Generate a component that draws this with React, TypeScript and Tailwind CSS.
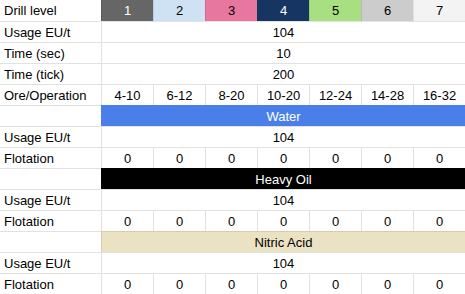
import React from "react";

const levels = [
  { n: "1", bg: "bg-[#666666]", bd: "border-[#5a5a5a]", tx: "text-white" },
  { n: "2", bg: "bg-[#cfe2f3]", bd: "border-[#b8cde2]", tx: "text-black" },
  { n: "3", bg: "bg-[#e8779f]", bd: "border-[#d6688f]", tx: "text-black" },
  { n: "4", bg: "bg-[#163562]", bd: "border-[#163562]", tx: "text-white" },
  { n: "5", bg: "bg-[#a8df80]", bd: "border-[#96cf6e]", tx: "text-black" },
  { n: "6", bg: "bg-[#cccccc]", bd: "border-[#b8b8b8]", tx: "text-black" },
  { n: "7", bg: "bg-[#f3f3f3]", bd: "border-[#e0e0e0]", tx: "text-black" },
];

const ores = ["4-10", "6-12", "8-20", "10-20", "12-24", "14-28", "16-32"];

function Label({ text, first }: { text: string; first?: boolean }) {
  return (
    <div
      className={`h-[21px] pl-[4px] flex items-center whitespace-nowrap border-[#e2e2e2] ${first ? "" : "border-t"}`}
    >
      {text}
    </div>
  );
}

function Cell({ text }: { text: string }) {
  return (
    <div className="h-[21px] border-t border-l border-[#e2e2e2] flex items-center justify-center">
      {text}
    </div>
  );
}

function Span({ text }: { text: string }) {
  return (
    <div className="col-span-7 h-[21px] border-t border-l border-[#e2e2e2] flex items-center justify-center">
      {text}
    </div>
  );
}

function Banner({ text, cls }: { text: string; cls: string }) {
  return (
    <>
      <Label text="" />
      <div className={`col-span-7 h-[21px] border-t border-l flex items-center justify-center ${cls}`}>
        {text}
      </div>
    </>
  );
}

function ZeroRow() {
  return (
    <>
      <Label text="Flotation" />
      {ores.map((o) => (
        <Cell key={o} text="0" />
      ))}
    </>
  );
}

export default function App() {
  return (
    <div
      className="w-[465px] h-[294px] overflow-hidden bg-white text-black text-[13px] leading-none"
      style={{ fontFamily: '"Liberation Sans", Arial, sans-serif' }}
    >
      <div className="grid grid-cols-[101px_repeat(7,52px)]">
        <Label text="Drill level" first />
        {levels.map((l) => (
          <div
            key={l.n}
            className={`h-[21px] border-l flex items-center justify-center ${l.bg} ${l.bd} ${l.tx}`}
          >
            {l.n}
          </div>
        ))}

        <Label text="Usage EU/t" />
        <Span text="104" />
        <Label text="Time (sec)" />
        <Span text="10" />
        <Label text="Time (tick)" />
        <Span text="200" />
        <Label text="Ore/Operation" />
        {ores.map((o) => (
          <Cell key={o} text={o} />
        ))}

        <Banner text="Water" cls="bg-[#4a7fea] border-[#4a7fea] text-white" />
        <Label text="Usage EU/t" />
        <Span text="104" />
        <ZeroRow />

        <Banner text="Heavy Oil" cls="bg-black border-black text-white" />
        <Label text="Usage EU/t" />
        <Span text="104" />
        <ZeroRow />

        <Banner text="Nitric Acid" cls="bg-[#ebe1c3] border-[#d9cca8] text-black" />
        <Label text="Usage EU/t" />
        <Span text="104" />
        <ZeroRow />
      </div>
    </div>
  );
}
